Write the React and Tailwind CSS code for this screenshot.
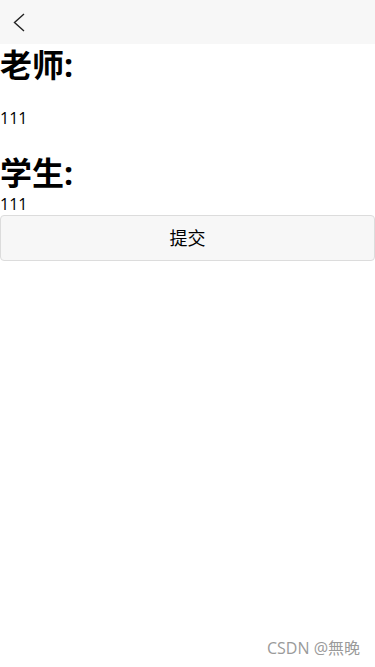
import React from 'react';

const cjk = { fontFamily: '"Open Sans", "Noto Sans CJK SC", sans-serif' };

const App = () => {
    return (
        <div className="relative min-h-[667px] w-[375px] bg-white text-black" style={cjk}>
            {/* top bar */}
            <div className="h-11 bg-[#f7f7f7] flex items-center pl-[13px]">
                <svg width="13" height="19" viewBox="0 0 13 19" fill="none">
                    <polyline points="11,1 1.5,9.5 11,18" stroke="#222" strokeWidth="1.4" />
                </svg>
            </div>

            <h1 className="text-[32px] font-bold leading-[36px] mt-[3px]">老师:</h1>
            <p className="text-base leading-[22px] mt-[24px]">111</p>

            <h1 className="text-[32px] font-bold leading-[34px] mt-[27px]">学生:</h1>
            <div className="text-base leading-[22px] mt-[3px]">111</div>

            <button className="w-full h-[46px] bg-[#f7f7f7] border border-[#dcdcdc] rounded-[4px] text-[18px] text-black">
                提交
            </button>

            <span className="absolute right-[15px] bottom-[7px] text-[16px] text-[#9a9a9a]">CSDN @無晚</span>
        </div>
    );
};

export default App;
